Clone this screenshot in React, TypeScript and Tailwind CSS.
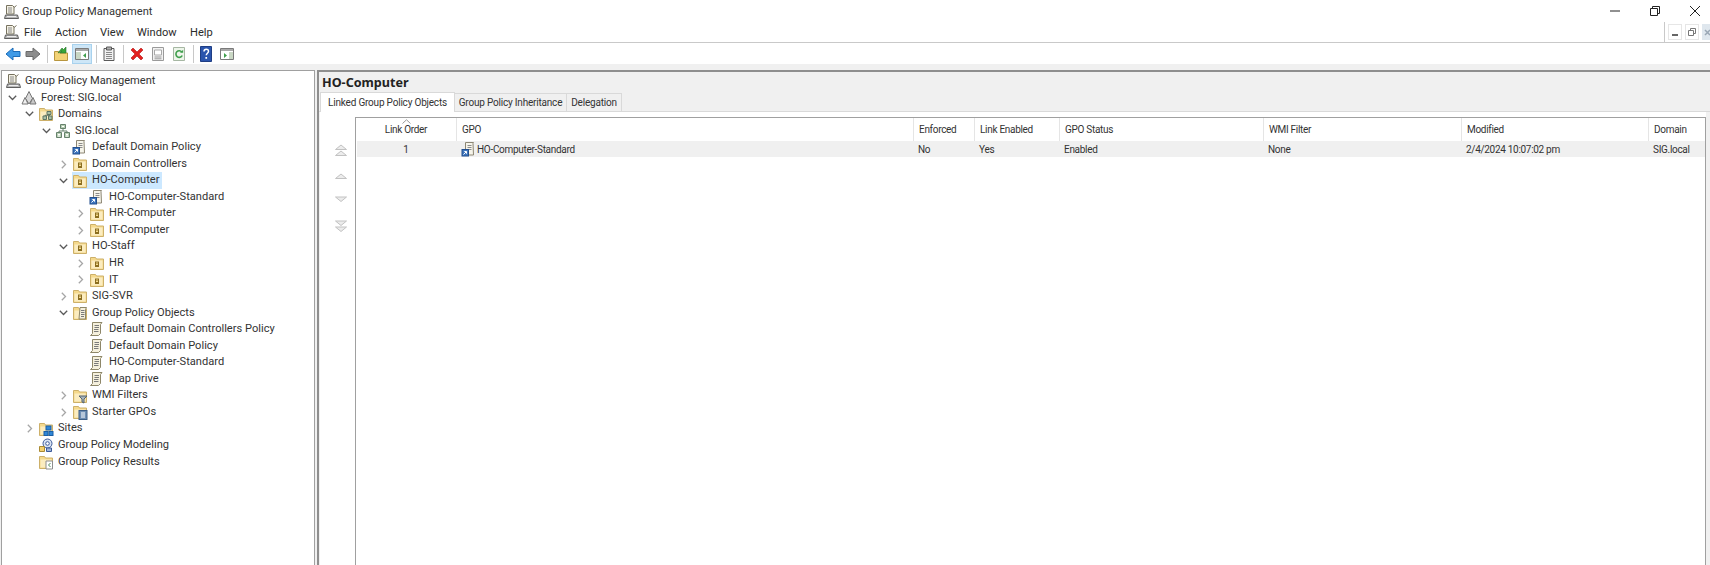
import type { ReactNode } from 'react';

const ui = "font-['Roboto',sans-serif]";
const heading = "font-['Noto_Sans',sans-serif]";

function Svg({ children, size = 16 }: { children: ReactNode; size?: number }) {
    return (
        <svg width={size} height={size} viewBox="0 0 16 16" className="shrink-0">
            {children}
        </svg>
    );
}

function ConsoleIcon() {
    return (
        <Svg>
            <path d="M2.5 1.5h6l1.5 1.5v7h-7.5z" fill="#f4f1e4" stroke="#77725f" />
            <path d="M4 4h4M4 6h4M4 8h4" stroke="#8b8b8b" />
            <path d="M10 3.5l2.5-2" stroke="#77725f" />
            <path d="M1.5 11h12l1 3.5h-14z" fill="#b9b9b9" stroke="#5f5f5f" />
            <path d="M3 12.5h9" stroke="#eeeeee" />
        </Svg>
    );
}

function ForestIcon() {
    return (
        <Svg>
            <path d="M8 1.5l3.5 7-3.5 5.5-3.5-5.5z" fill="#d9d9d9" stroke="#777777" />
            <path d="M4 7.5l3 6.5H1z" fill="#f1f1f1" stroke="#777777" />
            <path d="M12 7.5l3 6.5H9z" fill="#c9c9c9" stroke="#777777" />
        </Svg>
    );
}

function FolderBase({ children }: { children?: ReactNode }) {
    return (
        <Svg>
            <path d="M1.500 2.500h5l1 1.500h7v10.500h-13z" fill="#f5d98c" stroke="#cdb069" />
            <path d="M2.500 5.500h11v8h-11z" fill="#fbecc0" />
            {children}
        </Svg>
    );
}

function DomainsIcon() {
    return (
        <FolderBase>
            <path d="M9 5.500h4v3H9zM5 10h3.500v3.500H5zM10.500 10H14v3.500h-3.500z" fill="#a9bfa6" stroke="#5f7563" />
            <path d="M11 8.500V10M7 10V9.300h5" stroke="#5f7563" fill="none" />
        </FolderBase>
    );
}

function DomainIcon() {
    return (
        <Svg>
            <path d="M5.500 1.500h5v4h-5zM1.500 9.500h5v5h-5zM9.500 9.500h5v5h-5z" fill="#b8cfb4" stroke="#66816c" />
            <path d="M8 5.500v2.500M4 9.500V8h8v1.500" stroke="#66816c" fill="none" />
            <path d="M3 11.500h2M3 13h2M11 11.500h2M11 13h2M7 3.500h2" stroke="#ffffff" />
        </Svg>
    );
}

function GpoLinkIcon() {
    return (
        <Svg>
            <path d="M4.500 1.500h8l-.5 1 .5 11.500h-8z" fill="#f6f4ea" stroke="#8c8674" />
            <path d="M6.500 4.500h4M6.500 6.500h4M6.500 8.500h4" stroke="#8b8b8b" />
            <rect x="1" y="8.500" width="6.500" height="6.500" fill="#3f76bd" stroke="#234f8e" />
            <path d="M2.500 13.500l2.800-2.800M3.300 10.500h2.200v2.200" stroke="#ffffff" fill="none" />
        </Svg>
    );
}

function OuIcon() {
    return (
        <FolderBase>
            <path d="M6 6.500h4v5.500H6z" fill="#8a6d1f" />
            <path d="M7 8h2M7 9.500h2" stroke="#f7dc8f" />
        </FolderBase>
    );
}

function ScriptIcon() {
    return (
        <Svg>
            <path d="M3.500 1.500h9.500l-1.500 2v9l-2 2H1.500l2-2z" fill="#f5f0dc" stroke="#8e8769" />
            <path d="M5.500 4.500h4.500M5.500 6.500h4.500M5 8.500h4.500M5 10.500h4.500" stroke="#7a7a7a" />
        </Svg>
    );
}

function GpoFolderIcon() {
    return (
        <FolderBase>
            <path d="M8 2.500h6.500l-1 2v9.500H7z" fill="#f5f0dc" stroke="#8e8769" />
            <path d="M9 5.500h3.500M9 7.500h3.500M9 9.500h3.500M9 11.500h3" stroke="#7a7a7a" />
        </FolderBase>
    );
}

function WmiIcon() {
    return (
        <FolderBase>
            <path d="M7 8h8l-3 3v4l-2-1v-3z" fill="#a5b3bd" stroke="#55636d" />
        </FolderBase>
    );
}

function StarterIcon() {
    return (
        <FolderBase>
            <rect x="7" y="6.500" width="8" height="9" fill="#6f8fb4" stroke="#3e5f86" />
            <path d="M9 9h4M9 11h4M9 13h4" stroke="#ffffff" />
        </FolderBase>
    );
}

function SitesIcon() {
    return (
        <FolderBase>
            <rect x="8" y="5" width="5" height="4" fill="#2f86d6" stroke="#1b5fa5" />
            <rect x="6" y="10.500" width="4" height="4" fill="#2f86d6" stroke="#1b5fa5" />
            <rect x="11" y="10.500" width="4" height="4" fill="#2f86d6" stroke="#1b5fa5" />
        </FolderBase>
    );
}

function ModelingIcon() {
    return (
        <Svg>
            <circle cx="9.500" cy="6.500" r="4.500" fill="#d8e2f2" stroke="#3d5b99" />
            <circle cx="9.500" cy="6.500" r="1.800" fill="#ffffff" stroke="#3d5b99" />
            <path d="M1.500 9.500h5v5h-5z" fill="#f4cf6d" stroke="#a98a33" />
            <path d="M8.500 11h5v3.500h-5z" fill="#9fb4d6" stroke="#3d5b99" />
        </Svg>
    );
}

function ResultsIcon() {
    return (
        <FolderBase>
            <path d="M8 7h6.500v8H8z" fill="#ffffff" stroke="#8e8e8e" />
            <path d="M12.500 9l-2 2 2 2" stroke="#4d8c5d" fill="none" />
        </FolderBase>
    );
}

function Caret({ state }: { state?: 'open' | 'closed' }) {
    return (
        <span className="w-[17px] flex shrink-0 justify-center">
            {state === 'open' && (
                <svg width="9" height="6" viewBox="0 0 9 6">
                    <path d="M.8.800L4.500 4.500 8.200.800" fill="none" stroke="#5a5a5a" strokeWidth="1.300" />
                </svg>
            )}
            {state === 'closed' && (
                <svg width="6" height="9" viewBox="0 0 6 9">
                    <path d="M.800.800L4.500 4.500.800 8.200" fill="none" stroke="#a6a6a6" strokeWidth="1.300" />
                </svg>
            )}
        </span>
    );
}

const indent = ['pl-[2px]', 'pl-[19px]', 'pl-[36px]', 'pl-[53px]', 'pl-[70px]'];

type TreeRow = { label: string; level: number; icon: ReactNode; state?: 'open' | 'closed'; selected?: boolean };

const treeRows: TreeRow[] = [
    { label: 'Forest: SIG.local', level: 0, icon: <ForestIcon />, state: 'open' },
    { label: 'Domains', level: 1, icon: <DomainsIcon />, state: 'open' },
    { label: 'SIG.local', level: 2, icon: <DomainIcon />, state: 'open' },
    { label: 'Default Domain Policy', level: 3, icon: <GpoLinkIcon /> },
    { label: 'Domain Controllers', level: 3, icon: <OuIcon />, state: 'closed' },
    { label: 'HO-Computer', level: 3, icon: <OuIcon />, state: 'open', selected: true },
    { label: 'HO-Computer-Standard', level: 4, icon: <GpoLinkIcon /> },
    { label: 'HR-Computer', level: 4, icon: <OuIcon />, state: 'closed' },
    { label: 'IT-Computer', level: 4, icon: <OuIcon />, state: 'closed' },
    { label: 'HO-Staff', level: 3, icon: <OuIcon />, state: 'open' },
    { label: 'HR', level: 4, icon: <OuIcon />, state: 'closed' },
    { label: 'IT', level: 4, icon: <OuIcon />, state: 'closed' },
    { label: 'SIG-SVR', level: 3, icon: <OuIcon />, state: 'closed' },
    { label: 'Group Policy Objects', level: 3, icon: <GpoFolderIcon />, state: 'open' },
    { label: 'Default Domain Controllers Policy', level: 4, icon: <ScriptIcon /> },
    { label: 'Default Domain Policy', level: 4, icon: <ScriptIcon /> },
    { label: 'HO-Computer-Standard', level: 4, icon: <ScriptIcon /> },
    { label: 'Map Drive', level: 4, icon: <ScriptIcon /> },
    { label: 'WMI Filters', level: 3, icon: <WmiIcon />, state: 'closed' },
    { label: 'Starter GPOs', level: 3, icon: <StarterIcon />, state: 'closed' },
    { label: 'Sites', level: 1, icon: <SitesIcon />, state: 'closed' },
    { label: 'Group Policy Modeling', level: 1, icon: <ModelingIcon /> },
    { label: 'Group Policy Results', level: 1, icon: <ResultsIcon /> },
];

function ToolSep() {
    return <span className="w-px h-[18px] bg-[#c8c8c8] mx-[3.5px]" />;
}

function Toolbar() {
    return (
        <div className="h-[21px] bg-white flex items-center pl-[3px] shrink-0">
            <span className="w-[20px] flex justify-center">
                <Svg>
                    <path d="M1 8l7-6v3.500h7v5H8V14z" fill="#3f9ae6" stroke="#1c6cb8" />
                </Svg>
            </span>
            <span className="w-[20px] flex justify-center">
                <Svg>
                    <path d="M15 8L8 2v3.500H1v5h7V14z" fill="#8d8d8d" stroke="#6b6b6b" />
                </Svg>
            </span>
            <ToolSep />
            <span className="w-[20px] flex justify-center">
                <Svg>
                    <path d="M1.500 5.500h4l1 1.500h8v7.500h-13z" fill="#f3d377" stroke="#b8963f" />
                    <path d="M5 7l4-5 1.500 1.500L13 1v6H7l2-2z" fill="#3aa63a" stroke="#23742b" strokeWidth=".6" />
                </Svg>
            </span>
            <span className="w-[20px] h-[20px] flex justify-center items-center bg-[#cde6f7] border border-[#a8d2ee] ml-px">
                <Svg>
                    <path d="M1.500 2.500h13v11h-13z" fill="#ffffff" stroke="#7a7a7a" />
                    <path d="M2 3h12v2H2z" fill="#a9a9a9" />
                    <path d="M2 6h5v7H2z" fill="#c9d7c4" />
                    <path d="M12 7L9 9.500 12 12z" fill="#3f9f4c" />
                </Svg>
            </span>
            <ToolSep />
            <span className="w-[20px] flex justify-center -ml-[1px]">
                <Svg>
                    <path d="M3 2.500h10v12H3z" fill="#f2f2f2" stroke="#5a5a5a" />
                    <path d="M5.500 1h5v3h-5z" fill="#b0b0b0" stroke="#5a5a5a" />
                    <path d="M5 6.500h6M5 8.500h6M5 10.500h6M5 12.500h6" stroke="#8a8a8a" />
                </Svg>
            </span>
            <ToolSep />
            <span className="w-[20px] flex justify-center">
                <Svg>
                    <path d="M2 4l2-2 4 4 4-4 2 2-4 4 4 4-2 2-4-4-4 4-2-2 4-4z" fill="#e3211f" stroke="#b01414" strokeWidth=".6" />
                </Svg>
            </span>
            <span className="w-[21px] flex justify-center">
                <Svg>
                    <path d="M2.500 1.500h11v13h-11z" fill="#f2f2f2" stroke="#9a9a9a" />
                    <path d="M4.500 4h7v5h-7z" fill="#ffffff" stroke="#a9a9a9" />
                    <path d="M4.500 11h7M4.500 12.800h7" stroke="#9a9a9a" />
                </Svg>
            </span>
            <span className="w-[21px] flex justify-center">
                <Svg>
                    <path d="M2.500 1.500h11v13h-11z" fill="#edf5ea" stroke="#a6b7a3" />
                    <path d="M11.200 9.500A3.300 3.300 0 1 1 10.800 6" fill="none" stroke="#3f9f4c" strokeWidth="1.600" />
                    <path d="M9 6.800h3.200V3.800z" fill="#3f9f4c" />
                </Svg>
            </span>
            <ToolSep />
            <span className="w-[20px] flex justify-center -ml-[1px]">
                <Svg>
                    <path d="M2.500 .500h11v15h-11z" fill="#2b55ad" stroke="#1f3e84" />
                    <path d="M6 5.500c0-3 4.500-3 4.500-.3 0 2-2.200 2-2.200 4" fill="none" stroke="#ffffff" strokeWidth="1.500" />
                    <path d="M7.400 11h1.700v1.800H7.400z" fill="#ffffff" />
                </Svg>
            </span>
            <span className="w-[21px] flex justify-center">
                <Svg>
                    <path d="M1.500 2.500h13v11h-13z" fill="#ffffff" stroke="#7a7a7a" />
                    <path d="M2 3h12v2H2z" fill="#a9a9a9" />
                    <path d="M10 6h4v7h-4z" fill="#c9d7c4" />
                    <path d="M5 7l3 2.500L5 12z" fill="#3f9f4c" />
                </Svg>
            </span>
        </div>
    );
}

// widths of the linked GPO list, taken from the separators
const columns = [
    { title: 'Link Order', width: 'w-[100px]', value: '1', center: true },
    { title: 'GPO', width: 'w-[457px]', value: 'HO-Computer-Standard', icon: true },
    { title: 'Enforced', width: 'w-[61px]', value: 'No' },
    { title: 'Link Enabled', width: 'w-[85px]', value: 'Yes' },
    { title: 'GPO Status', width: 'w-[204px]', value: 'Enabled' },
    { title: 'WMI Filter', width: 'w-[198px]', value: 'None' },
    { title: 'Modified', width: 'w-[187px]', value: '2/4/2024 10:07:02 pm' },
    { title: 'Domain', width: 'flex-1', value: 'SIG.local' },
];

function Mover({ dir, double }: { dir: 'up' | 'down'; double?: boolean }) {
    const up = <path d="M1.500 9.500L7 5l5.500 4.500z" fill="#ececec" stroke="#c2c2c2" />;
    const down = <path d="M1.500 5L7 9.500 12.500 5z" fill="#ececec" stroke="#c2c2c2" />;
    return (
        <svg width="14" height="14" viewBox="0 0 14 14" className="shrink-0">
            {dir === 'up' && !double && up}
            {dir === 'down' && !double && down}
            {dir === 'up' && double && (
                <>
                    <path d="M1.500 6.500L7 2l5.500 4.500z" fill="#ececec" stroke="#c2c2c2" />
                    <path d="M1.500 12.500L7 8l5.500 4.500z" fill="#ececec" stroke="#c2c2c2" />
                </>
            )}
            {dir === 'down' && double && (
                <>
                    <path d="M1.500 2L7 6.500 12.500 2z" fill="#ececec" stroke="#c2c2c2" />
                    <path d="M1.500 8L7 12.500 12.500 8z" fill="#ececec" stroke="#c2c2c2" />
                </>
            )}
        </svg>
    );
}

export default function App() {
    return (
        <div className={`${ui} w-[1710px] h-[565px] overflow-hidden flex flex-col bg-[#f0f0f0] text-[11.1px] text-[#2b2b2b]`}>
            {/* Title bar */}
            <div className="h-[22px] bg-white flex items-center pl-[4px] pt-[2px] shrink-0">
                <ConsoleIcon />
                <span className="ml-[2px] text-[#333]">Group Policy Management</span>
                <div className="ml-auto -mt-[2px] flex items-center gap-[26px] pr-[8px]">
                    <svg width="14" height="14" viewBox="0 0 14 14">
                        <path d="M2 7h10" stroke="#222" />
                    </svg>
                    <svg width="14" height="14" viewBox="0 0 14 14">
                        <path d="M2.500 4.500h7v7h-7zM4.500 4.500v-2h7v7h-2" fill="none" stroke="#222" />
                    </svg>
                    <svg width="14" height="14" viewBox="0 0 14 14">
                        <path d="M2 2l10 10M12 2L2 12" stroke="#222" />
                    </svg>
                </div>
            </div>

            {/* Menu bar */}
            <div className="h-[21px] bg-white flex items-center pl-[4px] border-b border-[#c9c9c9] shrink-0">
                <ConsoleIcon />
                <nav className="flex ml-[4px] mt-[2px]">
                    <span className="w-[31px]">File</span>
                    <span className="w-[45px]">Action</span>
                    <span className="w-[37px]">View</span>
                    <span className="w-[53px]">Window</span>
                    <span>Help</span>
                </nav>
                <div className="ml-auto h-full flex items-center border-l border-[#c9c9c9] pl-[3px] gap-[3px] w-[46px] overflow-hidden">
                    <span className="w-[14px] h-[16px] shrink-0 border border-[#e6e6e6] flex items-end justify-center pb-[3px]">
                        <span className="w-[6px] h-[2px] bg-[#666]" />
                    </span>
                    <span className="w-[14px] h-[16px] shrink-0 border border-[#e6e6e6] flex items-center justify-center">
                        <svg width="8" height="8" viewBox="0 0 8 8">
                            <path d="M.5 2.500h5v5h-5zM2.500 2.500v-2h5v5h-2" fill="none" stroke="#777" />
                        </svg>
                    </span>
                    <span className="w-[14px] h-[16px] shrink-0 bg-[#dfe7ee] flex items-center pl-[2px]">
                        <svg width="7" height="7" viewBox="0 0 7 7">
                            <path d="M1 1l5 5M6 1L1 6" stroke="#9aa7b5" strokeWidth="1.500" />
                        </svg>
                    </span>
                </div>
            </div>

            <Toolbar />

            <div className="h-[6px] bg-[#f0f0f0] shrink-0" />

            <div className="flex-1 flex min-h-0 pl-[1px]">
                {/* Console tree */}
                <div className="w-[314px] shrink-0 bg-white border border-b-0 border-[#a0a0a0] pt-[2px] text-[#333]">
                    <div className="h-[16.55px] flex items-center pl-[4px]">
                        <ConsoleIcon />
                        <span className="ml-[3px]">Group Policy Management</span>
                    </div>
                    {treeRows.map((row, i) => (
                        <div key={i} className={`h-[16.55px] flex items-center ${indent[row.level]}`}>
                            <Caret state={row.state} />
                            <span className={`flex items-center h-full pr-[2px] ${row.selected ? 'bg-[#cce8ff]' : ''}`}>
                                <Svg>{row.icon}</Svg>
                                <span className="ml-[4px] whitespace-nowrap">{row.label}</span>
                            </span>
                        </div>
                    ))}
                </div>

                {/* Result pane */}
                <div className="flex-1 ml-[2px] flex flex-col bg-[#f0f0f0] border-l-2 border-t-2 border-[#8e8e8e] min-w-0">
                    <div className={`${heading} h-[20px] pl-[3px] pt-[1px] font-bold text-[12.6px] leading-[20px] text-[#222] shrink-0`}>HO-Computer</div>
                    <div className="flex items-end h-[20px] pl-[1px] text-[10px] tracking-[-0.2px] text-[#333] border-b border-[#d9d9d9] shrink-0 whitespace-nowrap">
                        <span className="w-[135px] h-[20px] bg-white border border-b-0 border-[#d9d9d9] flex items-center justify-center -mb-px">
                            Linked Group Policy Objects
                        </span>
                        <span className="w-[112px] h-[18px] bg-[#f0f0f0] border-r border-t border-[#d9d9d9] flex items-center justify-center">
                            Group Policy Inheritance
                        </span>
                        <span className="w-[55px] h-[18px] bg-[#f0f0f0] border-r border-t border-[#d9d9d9] flex items-center justify-center">
                            Delegation
                        </span>
                    </div>
                    <div className="flex-1 flex min-h-0 bg-white pt-[5px] ml-[1px] mr-[4px]">
                        <div className="w-[35px] shrink-0 flex flex-col items-center pt-[26px] pl-[7px]">
                            <Mover dir="up" double />
                            <span className="h-[12px] shrink-0" />
                            <Mover dir="up" />
                            <span className="h-[9px] shrink-0" />
                            <Mover dir="down" />
                            <span className="h-[13px] shrink-0" />
                            <Mover dir="down" double />
                        </div>
                        <div className="flex-1 border-l border-t border-r border-[#a0a0a0] text-[10px] tracking-[-0.3px] text-[#333] min-w-0">
                            <div className="flex h-[23px] relative">
                                <svg width="9" height="5" viewBox="0 0 9 5" className="absolute left-[46px] top-[1px]">
                                    <path d="M.5 4.500L4.500.8l4 3.700" fill="none" stroke="#9a9a9a" />
                                </svg>
                                {columns.map((col, i) => (
                                    <div
                                        key={col.title}
                                        className={`${col.width} flex items-center ${col.center ? 'justify-center' : 'pl-[5px]'} ${i > 0 ? 'border-l border-[#e5e5e5]' : ''}`}
                                    >
                                        {col.title}
                                    </div>
                                ))}
                            </div>
                            <div className="flex h-[16px] bg-[#f0f0f0] ml-[1px]">
                                {columns.map((col, i) => (
                                    <div
                                        key={col.title}
                                        className={`${col.width} flex items-center ${col.center ? 'justify-center -ml-px' : 'pl-[5px]'} ${i === 1 ? 'pl-[4px]' : ''} whitespace-nowrap`}
                                    >
                                        {col.icon && <GpoLinkIcon />}
                                        {col.value}
                                    </div>
                                ))}
                            </div>
                        </div>
                    </div>
                </div>
            </div>
        </div>
    );
}
